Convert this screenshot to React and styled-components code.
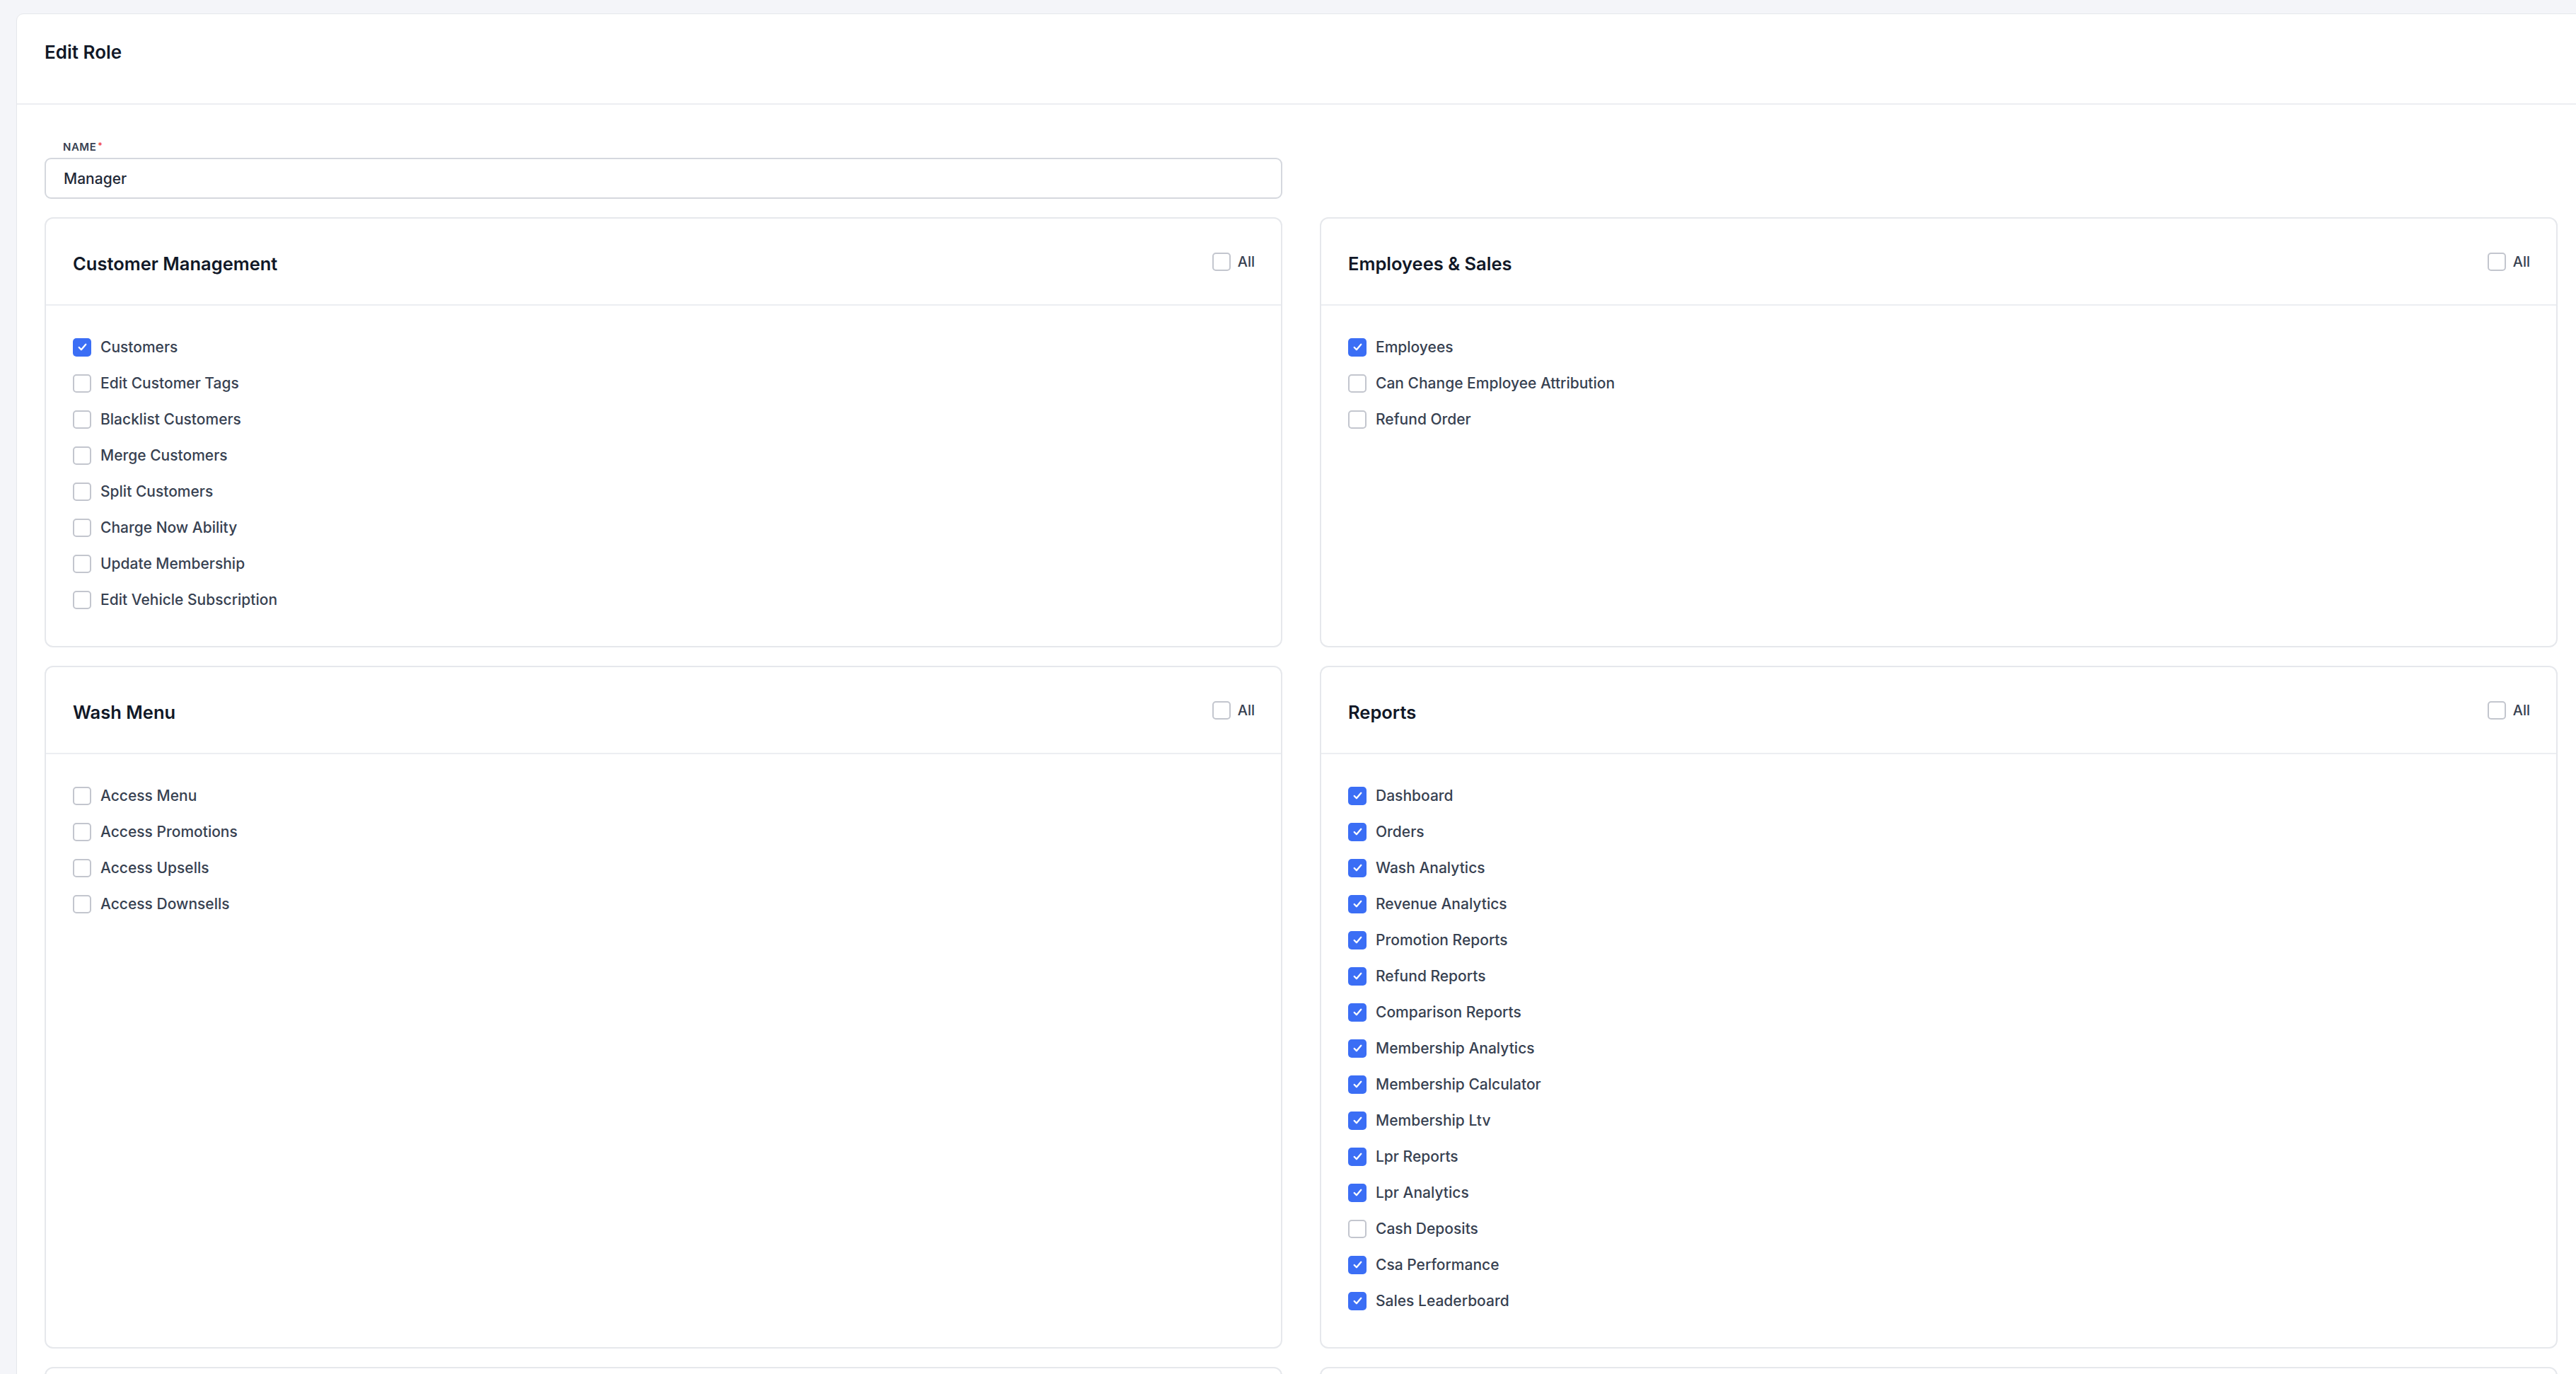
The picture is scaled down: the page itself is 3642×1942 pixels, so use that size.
import React from "react";
import styled, { createGlobalStyle } from "styled-components";

const Global = createGlobalStyle`
  html, body { margin: 0; padding: 0; background: #f4f5f9; overflow: hidden; }
  body { font-family: Inter, "Noto Sans", sans-serif; }
`;

const Page = styled.div`
  padding: 19px 0 0 23px;
`;
const Card = styled.div`
  width: 3630px;
  background: #fff;
  border: 1px solid #e5e7eb;
  border-radius: 10px;
`;
const Header = styled.div`
  height: 128px;
  padding: 0 39px 20px;
  display: flex;
  align-items: center;
  border-bottom: 2px solid #eceef2;
  font-size: 26px;
  font-weight: 600;
  color: #111827;
  box-sizing: border-box;
`;
const Body = styled.div`
  padding: 50px 39px 0 39px;
`;
const Label = styled.div`
  font-size: 15px;
  font-weight: 600;
  letter-spacing: 0.5px;
  color: #374151;
  margin-left: 26px;
  margin-bottom: 6px;
  span { color: #ef4444; font-size: 12px; vertical-align: top; margin-left: 2px; }
`;
const Input = styled.div`
  width: 1750px;
  height: 58px;
  box-sizing: border-box;
  border: 2px solid #d5d8de;
  border-radius: 9px;
  display: flex;
  align-items: center;
  padding: 0 25px;
  font-size: 21px;
  font-weight: 500;
  color: #1f2937;
`;
const Grid = styled.div`
  margin-top: 26px;
  display: grid;
  grid-template-columns: 1750px 1750px;
  column-gap: 53px;
  row-gap: 26px;
`;
const Panel = styled.div`
  border: 2px solid #e6e8ec;
  border-radius: 12px;
  background: #fff;
  min-height: ${(p) => p.$min || 0}px;
`;
const PanelHead = styled.div`
  height: 123px;
  box-sizing: border-box;
  border-bottom: 2px solid #eceef2;
  display: flex;
  align-items: center;
  justify-content: space-between;
  padding: 0 37px 0 38px;
`;
const PanelTitle = styled.div`
  font-size: 25.5px;
  font-weight: 600;
  color: #111827;
  margin-top: 6px;
`;
const AllWrap = styled.label`
  display: flex;
  align-items: center;
  gap: 10px;
  font-size: 20px;
  font-weight: 500;
  color: #374151;
`;
const List = styled.div`
  padding: 33px 38px 40px;
  display: flex;
  flex-direction: column;
`;
const Item = styled.div`
  height: 51px;
  display: flex;
  align-items: center;
  gap: 13px;
  font-size: 21px;
  font-weight: 500;
  color: #374151;
`;
const Box = styled.span`
  width: 26px;
  height: 26px;
  box-sizing: border-box;
  border-radius: 5px;
  border: ${(p) => (p.$on ? "none" : "2px solid #c3c6ce")};
  background: ${(p) => (p.$on ? "#3b6ef5" : "#fff")};
  display: inline-flex;
  align-items: center;
  justify-content: center;
  flex-shrink: 0;
`;

const Check = ({ on }) => (
  <Box $on={on}>
    {on && (
      <svg width="17" height="17" viewBox="0 0 16 16">
        <path d="M3.5 8.5l3 3 6-7" fill="none" stroke="#fff" strokeWidth="2.2" strokeLinecap="round" strokeLinejoin="round" />
      </svg>
    )}
  </Box>
);

const sections = [
  { title: "Customer Management", items: [["Customers", 1], ["Edit Customer Tags"], ["Blacklist Customers"], ["Merge Customers"], ["Split Customers"], ["Charge Now Ability"], ["Update Membership"], ["Edit Vehicle Subscription"]] },
  { title: "Employees & Sales", items: [["Employees", 1], ["Can Change Employee Attribution"], ["Refund Order"]] },
  { title: "Wash Menu", items: [["Access Menu"], ["Access Promotions"], ["Access Upsells"], ["Access Downsells"]] },
  { title: "Reports", items: [["Dashboard", 1], ["Orders", 1], ["Wash Analytics", 1], ["Revenue Analytics", 1], ["Promotion Reports", 1], ["Refund Reports", 1], ["Comparison Reports", 1], ["Membership Analytics", 1], ["Membership Calculator", 1], ["Membership Ltv", 1], ["Lpr Reports", 1], ["Lpr Analytics", 1], ["Cash Deposits"], ["Csa Performance", 1], ["Sales Leaderboard", 1]] },
];

export default function App() {
  return (
    <Page>
      <Global />
      <Card>
        <Header>Edit Role</Header>
        <Body>
          <Label>NAME<span>*</span></Label>
          <Input>Manager</Input>
          <Grid>
            {sections.map((s) => (
              <Panel key={s.title}>
                <PanelHead>
                  <PanelTitle>{s.title}</PanelTitle>
                  <AllWrap><Check />All</AllWrap>
                </PanelHead>
                <List>
                  {s.items.map(([name, on]) => (
                    <Item key={name}><Check on={!!on} />{name}</Item>
                  ))}
                </List>
              </Panel>
            ))}
            <Panel $min={300} />
            <Panel $min={300} />
          </Grid>
        </Body>
      </Card>
    </Page>
  );
}
